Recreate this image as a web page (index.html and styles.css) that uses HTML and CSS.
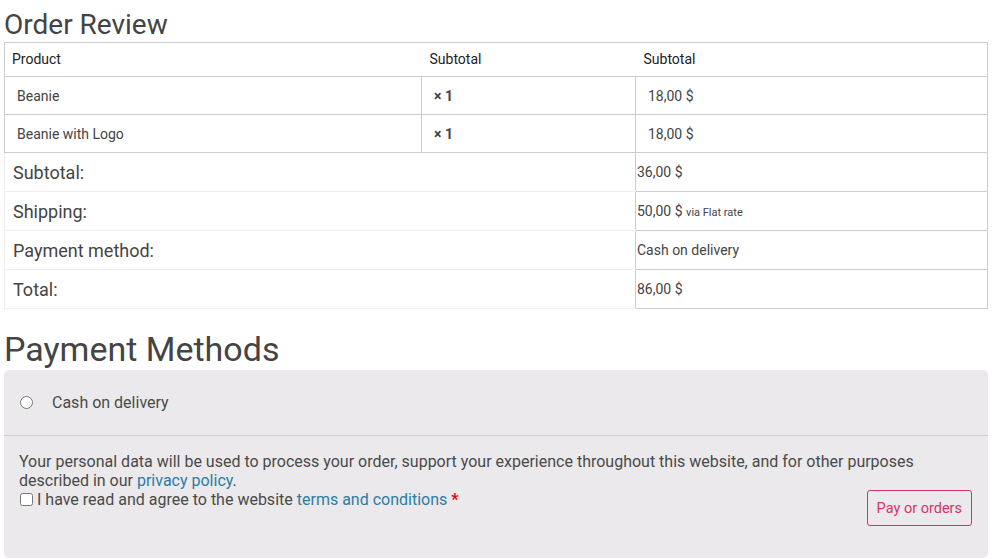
FILE: index.html
```html
<!DOCTYPE html>
<html lang="en">
<head>
<meta charset="utf-8">
<title>Order Review</title>
<link rel="stylesheet" href="styles.css">
</head>
<body>
<div class="page">
  <h2 class="title">Order Review</h2>
  <table class="review">
    <colgroup>
      <col class="c-product">
      <col class="c-qty">
      <col class="c-total">
    </colgroup>
    <thead>
      <tr>
        <th>Product</th>
        <th>Subtotal</th>
        <th>Subtotal</th>
      </tr>
    </thead>
    <tbody>
      <tr>
        <td>Beanie</td>
        <td class="qty">× 1</td>
        <td>18,00 $</td>
      </tr>
      <tr>
        <td>Beanie with Logo</td>
        <td class="qty">× 1</td>
        <td>18,00 $</td>
      </tr>
    </tbody>
    <tfoot>
      <tr>
        <th colspan="2">Subtotal:</th>
        <td>36,00 $</td>
      </tr>
      <tr>
        <th colspan="2">Shipping:</th>
        <td>50,00 $ <small class="via">via Flat rate</small></td>
      </tr>
      <tr>
        <th colspan="2">Payment method:</th>
        <td>Cash on delivery</td>
      </tr>
      <tr>
        <th colspan="2">Total:</th>
        <td>86,00 $</td>
      </tr>
    </tfoot>
  </table>

  <h2 class="title title-lg">Payment Methods</h2>
  <div class="payment">
    <div class="method">
      <input type="radio" class="radio" id="cod" name="pm">
      <label for="cod">Cash on delivery</label>
    </div>
    <div class="place">
      <p class="privacy">Your personal data will be used to process your order, support your experience throughout this website, and for other purposes described in our <a href="#">privacy policy</a>.</p>
      <div class="terms-row">
        <label class="terms"><input type="checkbox" class="check"> I have read and agree to the website <a href="#">terms and conditions</a> <span class="req">*</span></label>
        <button type="button" class="pay">Pay or orders</button>
      </div>
    </div>
  </div>
</div>
</body>
</html>
```
FILE: styles.css
```css
html, body {
  margin: 0;
  padding: 0;
  background: #fff;
}
body {
  font-family: Roboto, "Liberation Sans", Arial, sans-serif;
  color: #444;
}
.page {
  padding: 0 4px;
}
.title {
  margin: 8px 0 0;
  font-size: 28px;
  font-weight: 400;
  line-height: 1.2;
  color: #444;
}
.title-lg {
  font-size: 34px;
  margin: 20px 0 1px;
}
.review {
  width: 100%;
  border-collapse: collapse;
  font-size: 14px;
}
.c-product { width: 417px; }
.c-qty { width: 214px; }
.review thead th {
  height: 33px;
  padding: 0 8px;
  text-align: left;
  font-weight: 400;
  color: #222;
  border-top: 1px solid #ccc;
  border-bottom: 1px solid #ccc;
}
.review thead th:first-child { border-left: 1px solid #ccc; padding-left: 7px; }
.review thead th:last-child { border-right: 1px solid #ccc; }
.review tbody td {
  height: 36px;
  padding: 1px 12px 0;
  border: 1px solid #ccc;
  color: #444;
}
.review tbody td.qty {
  font-weight: 700;
}
.review tfoot th {
  height: 37px;
  padding: 1px 8px 0;
  text-align: left;
  font-size: 18px;
  font-weight: 400;
  color: #444;
  border: 1px solid #eee;
  border-right: none;
}
.review tfoot td {
  padding: 1px 1px 0;
  border: 1px solid #ccc;
  color: #444;
}
.via {
  font-size: 11px;
}
.payment {
  background: #ebe9eb;
  border-radius: 5px;
  font-size: 16px;
  color: #4a4a4a;
}
.method {
  display: flex;
  align-items: center;
  padding: 23px 15px 23px 15px;
  line-height: 19px;
  border-bottom: 1px solid #d3ced2;
}
.radio {
  width: 13px;
  height: 13px;
  margin: 0 19px 0 1px;
}
.place {
  padding: 16px 16px 32px 15px;
  line-height: 19px;
}
.privacy {
  margin: 0;
}
.payment a {
  color: #2b7ca6;
  text-decoration: none;
}
.terms-row {
  display: flex;
  justify-content: space-between;
  align-items: flex-start;
}
.terms {
  display: flex;
  align-items: center;
}
.check {
  width: 13px;
  height: 13px;
  margin: 0 4px 0 1px;
}
.terms a { margin: 0 4px; }
.req {
  color: #e00;
  font-weight: 700;
}
.pay {
  margin-top: 0;
  height: 36px;
  padding: 0 9px;
  background: transparent;
  border: 1px solid #d6336c;
  border-radius: 3px;
  color: #d6336c;
  font-family: Roboto, "Liberation Sans", Arial, sans-serif;
  font-size: 14.5px;
}
```
